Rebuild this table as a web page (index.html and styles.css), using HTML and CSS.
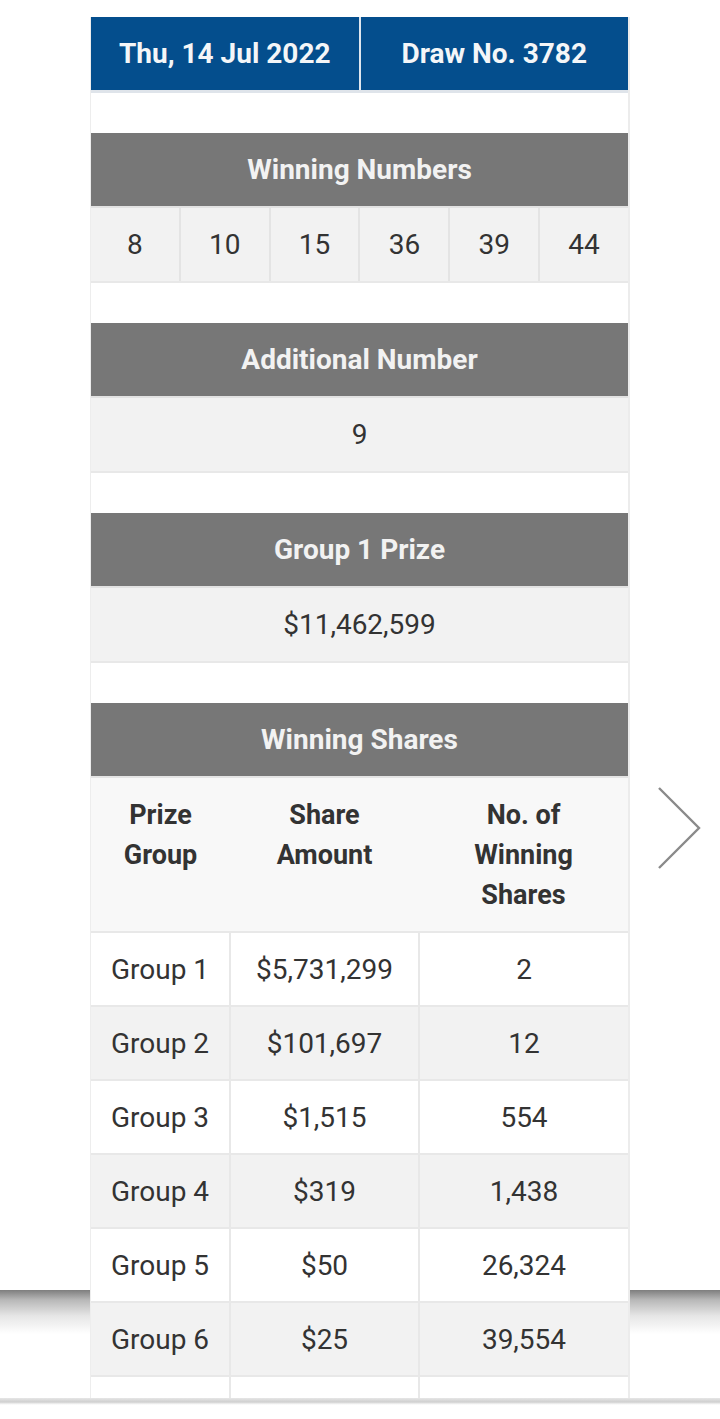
FILE: index.html
```html
<!DOCTYPE html>
<html>
<head>
<meta charset="utf-8">
<link rel="stylesheet" href="styles.css">
</head>
<body>
<div class="backdrop"></div>
<main class="page">
  <div class="card">
    <div class="draw-bar">
      <div class="draw-cell">Thu, 14 Jul 2022</div>
      <div class="draw-cell">Draw No. 3782</div>
    </div>

    <section class="block">
      <h2 class="block-title">Winning Numbers</h2>
      <div class="num-row">
        <div class="num">8</div>
        <div class="num">10</div>
        <div class="num">15</div>
        <div class="num">36</div>
        <div class="num">39</div>
        <div class="num">44</div>
      </div>
    </section>

    <section class="block">
      <h2 class="block-title">Additional Number</h2>
      <div class="num-row"><div class="num">9</div></div>
    </section>

    <section class="block">
      <h2 class="block-title">Group 1 Prize</h2>
      <div class="num-row"><div class="num">$11,462,599</div></div>
    </section>

    <section class="block">
      <h2 class="block-title">Winning Shares</h2>
      <table class="shares">
        <colgroup>
          <col class="c1">
          <col class="c2">
          <col class="c3">
        </colgroup>
        <thead>
          <tr>
            <th>Prize<br>Group</th>
            <th>Share<br>Amount</th>
            <th>No. of<br>Winning<br>Shares</th>
          </tr>
        </thead>
        <tbody>
          <tr><td>Group 1</td><td>$5,731,299</td><td>2</td></tr>
          <tr><td>Group 2</td><td>$101,697</td><td>12</td></tr>
          <tr><td>Group 3</td><td>$1,515</td><td>554</td></tr>
          <tr><td>Group 4</td><td>$319</td><td>1,438</td></tr>
          <tr><td>Group 5</td><td>$50</td><td>26,324</td></tr>
          <tr><td>Group 6</td><td>$25</td><td>39,554</td></tr>
          <tr><td></td><td></td><td></td></tr>
        </tbody>
      </table>
    </section>
  </div>
</main>
<svg class="next" width="48" height="86" viewBox="0 0 48 86" aria-hidden="true">
  <polyline points="3,2 43,42 3,82" fill="none" stroke="#8a8a8a" stroke-width="2.4"/>
</svg>
<div class="bottom-edge"></div>
</body>
</html>
```
FILE: styles.css
```css
html, body {
  margin: 0;
  padding: 0;
  background: #ffffff;
}
body {
  position: relative;
  height: 1419px;
  overflow: hidden;
  font-family: Roboto, "Noto Sans", "Liberation Sans", sans-serif;
  color: #333333;
}
.backdrop {
  position: absolute;
  left: 0;
  right: 0;
  top: 1290px;
  height: 110px;
  background: linear-gradient(to bottom, #7e7e7e 0px, #b8b8b8 10px, #e6e6e6 26px, #ffffff 44px);
  z-index: 0;
}
.page {
  position: relative;
  z-index: 1;
  padding: 17px 0 0 90px;
}
.card {
  box-sizing: border-box;
  width: 540px;
  background: #ffffff;
  border-left: 1px solid #ededed;
  border-right: 2px solid #ececec;
}
.draw-bar {
  display: flex;
  height: 73px;
  background: #044e8d;
  border-bottom: 3px solid #dfe4ea;
}
.draw-cell {
  flex: 1;
  display: flex;
  align-items: center;
  justify-content: center;
  color: #f4f6f8;
  font-weight: 700;
  font-size: 28px;
}
.draw-cell + .draw-cell {
  border-left: 2px solid #dfe6ee;
}
.block {
  margin-top: 40px;
}
.block-title {
  margin: 0;
  height: 73px;
  display: flex;
  align-items: center;
  justify-content: center;
  background: #777777;
  color: #f2f2f2;
  font-size: 28px;
  font-weight: 700;
}
.num-row {
  display: flex;
  border-top: 2px solid #e2e2e2;
  border-bottom: 2px solid #e8e8e8;
  background: #f2f2f2;
}
.num {
  flex: 1;
  height: 73px;
  display: flex;
  align-items: center;
  justify-content: center;
  font-size: 28px;
  color: #333333;
}
.num + .num {
  border-left: 2px solid #e4e4e4;
}
.shares {
  width: 537px;
  border-collapse: collapse;
  table-layout: fixed;
}
.shares .c1 { width: 139px; }
.shares .c2 { width: 189px; }
.shares .c3 { width: 209px; }
.shares th {
  background: #f8f8f8;
  font-size: 27px;
  font-weight: 700;
  line-height: 40px;
  color: #333333;
  padding: 17px 0 16px;
  vertical-align: top;
  border-top: 2px solid #e4e4e4;
  border-bottom: 2px solid #e8e8e8;
}
.shares td {
  height: 72px;
  padding: 0;
  text-align: center;
  font-size: 28px;
  color: #333333;
  border: 2px solid #e8e8e8;
  border-top: 0;
}
.shares td:first-child { border-left: 0; }
.shares td:last-child { border-right: 0; }
.shares tbody tr:nth-child(even) td {
  background: #f2f2f2;
}
.shares tbody tr:nth-child(odd) td {
  background: #ffffff;
}
.next {
  position: absolute;
  left: 656px;
  top: 786px;
  z-index: 2;
}
.bottom-edge {
  position: absolute;
  left: 0;
  right: 0;
  top: 1398px;
  height: 21px;
  background: linear-gradient(to bottom, #e6e6e6 0px, #cfcfcf 4px, #f4f4f4 6px, #ffffff 7px);
  z-index: 3;
}
```
